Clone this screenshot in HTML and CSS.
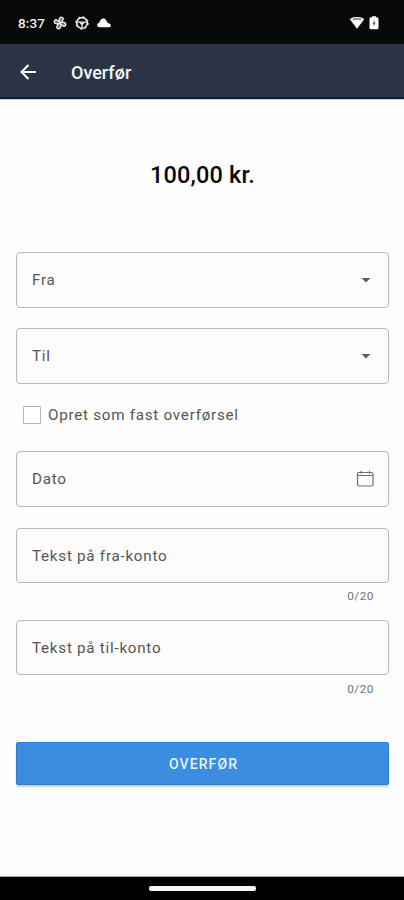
FILE: index.html
```
<!DOCTYPE html>
<html lang="da">
<head>
<meta charset="utf-8">
<title>Overfør</title>
<link rel="stylesheet" href="styles.css">
</head>
<body>
<div class="status">
  <span class="clock">8:37</span>
  <svg class="fan" width="14" height="14" viewBox="0 0 14 14" fill="#777" stroke="#eee" stroke-width="1.3"><path d="M7 7C4.500 5 4.500 1.200 7 1c2.500-.2 2.700 3 0 6zM7 7c2-2.500 5.800-2.500 6 0 .2 2.500-3 2.700-6 0zM7 7c2.500 2 2.500 5.800 0 6-2.500.2-2.700-3 0-6zM7 7c-2 2.500-5.800 2.500-6 0-.2-2.500 3-2.700 6 0z" transform="rotate(18 7 7)"/></svg>
  <svg class="wheel" width="14" height="14" viewBox="0 0 14 14" fill="none" stroke="#eee"><circle cx="7" cy="7" r="5.300" stroke-width="1.700"/><circle cx="7" cy="7" r="6.300" stroke-width="1" stroke-dasharray="2 2.950"/><path d="M2.500 6.200h9M7 7v4.500M5 6.500l2 2 2-2" stroke-width="1.300"/></svg>
  <svg class="cloud" width="14" height="10" viewBox="0 0 14 10" fill="#fff"><path d="M2.600 9.200C.9 9.200.1 8.200.1 7c0-1.300 1-2.200 2.200-2.300C2.900 2.200 4.300.4 6.300.4c1.900 0 3.100 1.700 3.700 3.500.5.900 1.300 1.200 2.200 1.500 2.300.8 2 3.800-.2 3.800z"/></svg>
  <svg class="wifi" width="16" height="14" viewBox="0 0 16 14"><path d="M.8 3.300C3.800.2 12.200.2 15.200 3.300L8 12.800z" fill="#fff"/><path d="M3.800 3.400Q8 2.200 12.200 3.400" fill="none" stroke="#333" stroke-width="1"/></svg>
  <svg class="battery" width="10" height="14" viewBox="0 0 10 14"><path d="M3 .3h4v1h1a1.500 1.500 0 0 1 1.500 1.500v8.900A1.600 1.600 0 0 1 7.900 13.300H2.100A1.600 1.600 0 0 1 .5 11.700V2.800A1.500 1.500 0 0 1 2 1.300h1z" fill="#fff"/><path d="M5.500 4 3.500 7.700h1.200V10.500l1.900-3.800H5.500z" fill="#555"/></svg>
</div>
<header class="appbar">
  <svg class="back" width="18" height="18" viewBox="0 0 18 18" fill="none" stroke="#fff" stroke-width="2"><path d="M16 9H2.500M8.500 2 1.500 9 8.500 16"/></svg>
  <h1 class="title">Overfør</h1>
</header>
<main class="form">
  <div class="amount">100,00 kr.</div>
  <div class="field"><span class="label">Fra</span><svg class="caret" width="10" height="5" viewBox="0 0 10 5"><path d="M.6 0h8.800L5 4.600z" fill="#5c5c5c"/></svg></div>
  <div class="field to"><span class="label">Til</span><svg class="caret" width="10" height="5" viewBox="0 0 10 5"><path d="M.6 0h8.800L5 4.600z" fill="#5c5c5c"/></svg></div>
  <label class="check"><span class="box"></span><span class="label recurring">Opret som fast overførsel</span></label>
  <div class="field"><span class="label date">Dato</span><svg class="calendar" width="18" height="17" viewBox="0 0 18 17" fill="none" stroke="#707070"><rect x="1.500" y="2.500" width="15.500" height="13.500" rx="1.500" stroke-width="1.200"/><path d="M1.500 5.500h15.500M5 .8v3M13.500.8v3"/></svg></div>
  <div class="field text"><span class="label from-text">Tekst på fra-konto</span></div>
  <div class="counter">0/20</div>
  <div class="field text second"><span class="label to-text">Tekst på til-konto</span></div>
  <div class="counter">0/20</div>
  <button class="submit">OVERFØR</button>
</main>
<footer class="nav"><span class="pill"></span></footer>
</body>
</html>
```
FILE: styles.css
```
* { box-sizing: border-box; }
body {
  margin: 0;
  width: 404px;
  height: 900px;
  display: flex;
  flex-direction: column;
  overflow: hidden;
  background: #fefefe;
  font-family: Roboto, sans-serif;
}
svg { display: block; flex: none; }
.status {
  height: 44px;
  flex: none;
  display: flex;
  align-items: center;
  padding: 2px 25px 0 18px;
  background: #080a0a;
}
.clock { width: 35px; color: #eee; font-size: 13.500px; font-weight: 500; letter-spacing: .1px; white-space: nowrap; }
.wheel { margin-left: 8px; }
.cloud { margin-left: 8px; }
.wifi { margin-left: auto; }
.battery { margin-left: 4px; }
.appbar {
  height: 55px;
  flex: none;
  display: flex;
  align-items: center;
  padding: 3px 20px 0;
  background: #2b3444;
  border-bottom: 2px solid #111d3d;
  box-shadow: 0 1px 0 #c9c9d3;
}
.title { margin: 1px 0 0 33px; color: #f4f4f6; font-size: 18px; font-weight: 500; line-height: 24px; letter-spacing: 0; }
.form { flex: 1; padding: 0 15px 0 16px; display: flex; flex-direction: column; }
.amount { margin: 60px 0 61px; text-align: center; font-size: 23.500px; font-weight: 500; line-height: 32px; color: #080808; letter-spacing: .15px; }
.field {
  height: 56px;
  flex: none;
  display: flex;
  align-items: center;
  justify-content: space-between;
  padding: 0 14px 0 15px;
  border: 1.500px solid #b8b8b8;
  border-radius: 4px;
  background: #fcfcfc;
}
.to { margin-top: 20px; }
.label { font-size: 15.200px; line-height: 20px; letter-spacing: .74px; color: #555; white-space: nowrap; }
.caret { margin-right: 3px; margin-top: 1px; }
.calendar { margin-top: -1px; }
.check { height: 67px; flex: none; display: flex; align-items: center; padding: 0 0 5px 7px; }
.box { width: 18px; height: 18px; border: 1.500px solid #b4b4b4; border-radius: 1px; background: #fff; }
.check .label { margin-left: 7px; }
.text { height: 55px; margin-top: 21px; }
.counter { height: 16px; margin-top: 5px; padding-right: 15px; text-align: right; font-size: 11.800px; line-height: 16px; letter-spacing: .5px; color: #707070; }
.second { margin-top: 16px; }
.second + .counter { margin-top: 6px; }
.submit {
  height: 43px;
  margin: 45px 0 0;
  padding: 2px 0 0 2px;
  border: 0;
  border-radius: 3px;
  background: #3c8ce0;
  box-shadow: inset 0 0 0 1px #2b80d3, 0 2px 2px #d0ccca;
  color: #e9f4ff;
  font: 500 14px/41px Roboto, sans-serif;
  letter-spacing: 1.100px;
}
.nav { height: 23px; flex: none; display: flex; justify-content: center; align-items: center; background: #000; box-shadow: 0 -1px 0 #aaa; }
.pill { width: 107px; height: 5px; border-radius: 2px; background: #f5f5f5; }
```
